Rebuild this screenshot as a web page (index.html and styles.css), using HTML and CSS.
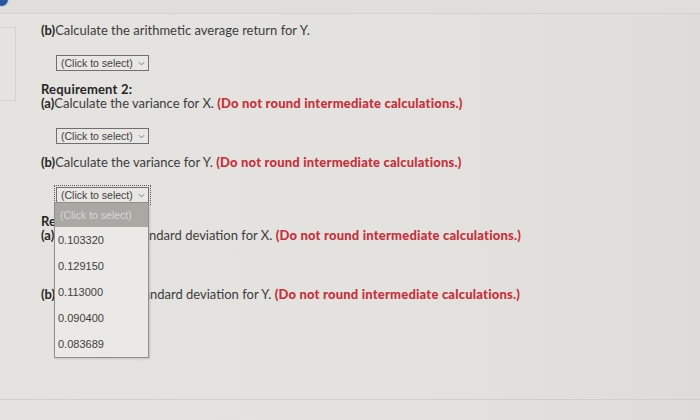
FILE: index.html
```html
<!DOCTYPE html>
<html lang="en">
<head>
  <meta charset="UTF-8" />
  <meta name="viewport" content="width=device-width, initial-scale=1" />
  <title>Requirements</title>
  <link rel="stylesheet" href="styles.css">
</head>
<body>

  <div class="topbar"><span class="dot"></span></div>

  <div class="page">
    <div class="side"></div>

    <div class="main">
      <p class="q"><b>(b)</b>Calculate the arithmetic average return for Y.</p>
      <div class="pick">
        <span class="sel">(Click to select) <svg class="chev" viewBox="0 0 8 5"><path d="M1 1 L4 4 L7 1" /></svg></span>
      </div>

      <h3>Requirement 2:</h3>
      <p class="q"><b>(a)</b>Calculate the variance for X. <strong class="warn">(Do not round intermediate calculations.)</strong></p>
      <div class="pick">
        <span class="sel">(Click to select) <svg class="chev" viewBox="0 0 8 5"><path d="M1 1 L4 4 L7 1" /></svg></span>
      </div>

      <p class="q"><b>(b)</b>Calculate the variance for Y. <strong class="warn">(Do not round intermediate calculations.)</strong></p>
      <div class="pick open">
        <span class="sel focus">(Click to select) <svg class="chev" viewBox="0 0 8 5"><path d="M1 1 L4 4 L7 1" /></svg></span>
        <ul class="list">
          <li class="on">(Click to select)</li>
          <li>0.103320</li>
          <li>0.129150</li>
          <li>0.113000</li>
          <li>0.090400</li>
          <li>0.083689</li>
        </ul>
      </div>

      <h3>Requirement 3:</h3>
      <p class="q"><b>(a)</b>Calculate the standard deviation for X. <strong class="warn">(Do not round intermediate calculations.)</strong></p>
      <div class="pick">
        <span class="sel">(Click to select) <svg class="chev" viewBox="0 0 8 5"><path d="M1 1 L4 4 L7 1" /></svg></span>
      </div>

      <p class="q"><b>(b)</b>Calculate the standard deviation for Y. <strong class="warn">(Do not round intermediate calculations.)</strong></p>
      <div class="pick">
        <span class="sel">(Click to select) <svg class="chev" viewBox="0 0 8 5"><path d="M1 1 L4 4 L7 1" /></svg></span>
      </div>
    </div>
  </div>

  <div class="foot"></div>

</body>
</html>
```

FILE: styles.css
```css
body {
  margin: 0;
  height: 420px;
  overflow: hidden;
  font-family: Lato, 'Open Sans', sans-serif;
  font-size: 13px;
  color: #3c3c3c;
  background: linear-gradient(90deg, #e4e3df 0%, #e3e2de 60%, #dddcd8 100%);
  display: flex;
  flex-direction: column;
}
.topbar {
  height: 13px;
  border-bottom: 1px solid #d3d2ce;
  background: #dfdeda;
  position: relative;
  overflow: hidden;
}
.dot {
  position: absolute;
  left: -6px;
  top: -8px;
  width: 13px;
  height: 13px;
  border-radius: 50%;
  background: #2b5699;
  border: 1px solid #c9d3e2;
}
.page {
  display: flex;
  flex: 1;
}
.side {
  width: 15px;
  height: 72px;
  margin-top: 13px;
  border: 1px solid #d4d3cf;
  border-left: none;
}
.main {
  padding: 8px 0 0 25px;
}
.q {
  margin: 0;
  line-height: 16px;
}
.q b {
  color: #262626;
}
.warn {
  color: #c7303b;
  font-weight: 900;
  letter-spacing: 0.2px;
}
h3 {
  margin: 10px 0 -2px;
  font-size: 13px;
  line-height: 16px;
  font-weight: 700;
  color: #262626;
  letter-spacing: 0.2px;
}
.pick {
  margin: 17px 0 10px 15px;
  position: relative;
  width: 93px;
  height: 16px;
}
.pick + .q {
  margin-top: 10px;
}
.sel {
  display: flex;
  align-items: center;
  gap: 5px;
  box-sizing: border-box;
  width: 93px;
  height: 16px;
  padding-left: 4px;
  border: 1px solid #707070;
  background: #e8e7e3;
  font-family: 'Liberation Sans', Arial, sans-serif;
  font-size: 10.5px;
  color: #3e3e3e;
}
.sel.focus {
  outline: 1px dotted #5a5a5a;
  outline-offset: 1px;
}
.chev {
  width: 7px;
  height: 5px;
  fill: none;
  stroke: #6a6a6a;
  stroke-width: 1;
}
.list {
  position: absolute;
  top: 15px;
  left: -2px;
  width: 93px;
  margin: 0;
  padding: 0;
  list-style: none;
  background: #eae9e5;
  border: 1px solid #8f8e8a;
  box-shadow: 1px 1px 2px rgba(0, 0, 0, 0.15);
  z-index: 2;
}
.list li {
  height: 26px;
  line-height: 26px;
  padding-left: 3px;
  font-family: 'Liberation Sans', Arial, sans-serif;
  font-size: 11px;
  color: #3e3e3e;
}
.list li.on {
  height: 24px;
  line-height: 24px;
  background: #a9a8a3;
  color: #d8d7d3;
  font-size: 10.5px;
  padding-left: 5px;
}
.foot {
  height: 20px;
  border-top: 1px solid #d0cfcb;
}
```
